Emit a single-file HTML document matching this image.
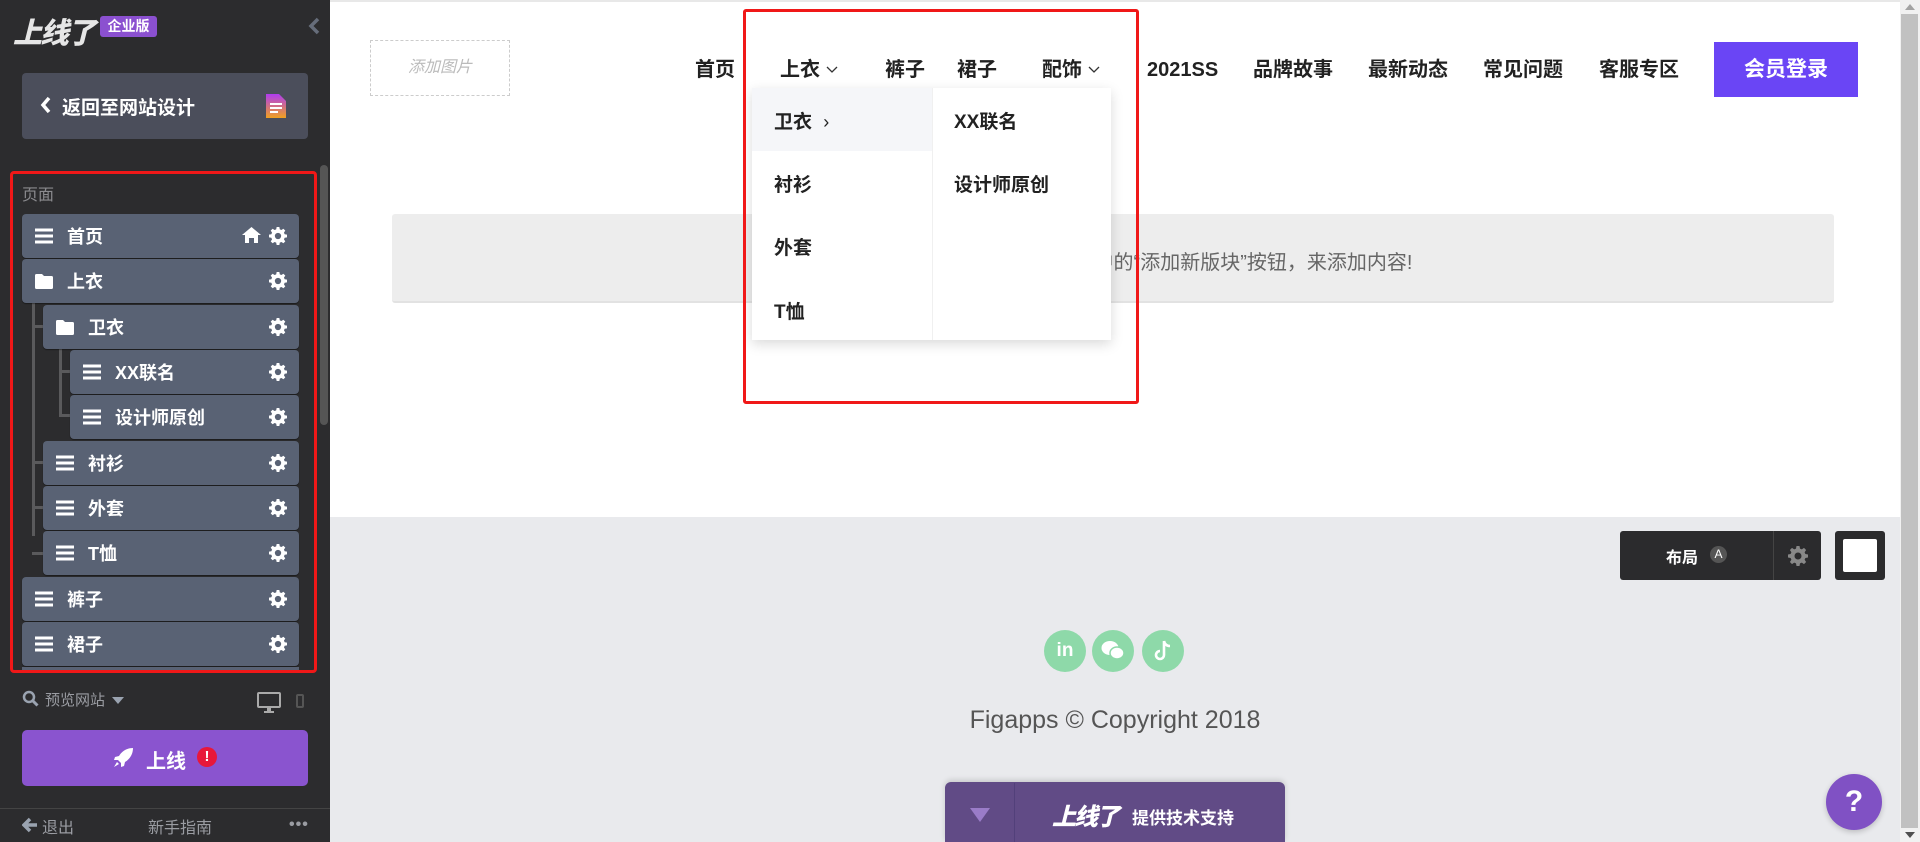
<!DOCTYPE html>
<html><head><meta charset="utf-8">
<style>
*{margin:0;padding:0;box-sizing:border-box}
body{width:1920px;height:842px;overflow:hidden;position:relative;background:#fff;font-family:"Liberation Sans","Noto Sans CJK SC",sans-serif}
.abs{position:absolute}
#side{left:0;top:0;width:330px;height:842px;background:#2c2c2e}
.row{position:absolute;height:44px;right:31px;background:#596274;border-radius:4px;box-shadow:0 1px 1px rgba(0,0,0,.4);color:#fff;font-weight:bold;font-size:18px;display:flex;align-items:center}
.row .ic{width:18px;margin-left:13px;margin-right:14px;display:flex}
.row .g{position:absolute;right:12px;top:13px}
.nav{position:absolute;top:56px;height:28px;line-height:28px;font-size:20px;font-weight:bold;color:#222;white-space:nowrap;display:flex;align-items:center}
.nav svg{margin-left:6px}
.dd{position:absolute;font-size:19px;font-weight:bold;color:#222}
</style></head><body>
<svg width="0" height="0" style="position:absolute"><defs>
  <symbol id="gear" viewBox="0 0 20 20"><path d="M8.5 0h3l.5 2.6 1.8.8 2.2-1.5 2.1 2.1-1.5 2.2.8 1.8 2.6.5v3l-2.6.5-.8 1.8 1.5 2.2-2.1 2.1-2.200-1.5-1.8.8-.5 2.6h-3l-.5-2.6-1.8-.8-2.2 1.5-2.1-2.1 1.5-2.2-.8-1.8L0 11.5v-3l2.6-.5.8-1.8-1.5-2.2 2.1-2.1 2.2 1.5 1.8-.8zM10 6.5a3.5 3.5 0 1 0 0 7 3.5 3.5 0 0 0 0-7z"/></symbol>
  <symbol id="bars" viewBox="0 0 18 16"><path d="M0 2h18M0 8h18M0 14h18" stroke="#fff" stroke-width="3"/></symbol>
  <symbol id="fold" viewBox="0 0 18 15"><path fill="#fff" d="M0 1.5Q0 0 1.5 0H7l2 2h7.5Q18 2 18 3.5v10q0 1.5-1.5 1.5h-15Q0 15 0 13.5z"/></symbol>
  <symbol id="chev" viewBox="0 0 12 8"><path d="M1 1l5 5 5-5" stroke="#333" stroke-width="1.3" fill="none"/></symbol>
 </defs></svg>
<div id="side" class="abs">
 <div class="abs" style="left:13px;top:10px;font-size:29px;font-weight:900;font-style:italic;color:#e6e6e6;letter-spacing:-2px">上线了</div>
 <div class="abs" style="left:100px;top:16px;width:57px;height:21px;background:#8b50d0;border-radius:3px;color:#fff;font-size:14px;font-weight:bold;text-align:center;line-height:21px">企业版</div>
 <svg class="abs" style="left:308px;top:17px" width="12" height="18" viewBox="0 0 12 18"><path d="M10 2 3 9l7 7" stroke="#666d7a" stroke-width="3.5" fill="none"/></svg>
 <div class="abs" style="left:22px;top:73px;width:286px;height:66px;background:#4b4e5b;border-radius:4px"></div>
 <svg class="abs" style="left:40px;top:96px" width="12" height="18" viewBox="0 0 12 18"><path d="M9 2 3 9l6 7" stroke="#fff" stroke-width="3.5" fill="none"/></svg>
 <div class="abs" style="left:62px;top:93px;color:#fff;font-size:19px;font-weight:bold">返回至网站设计</div>
 <svg class="abs" style="left:266px;top:94px" width="20" height="24" viewBox="0 0 20 24"><defs><linearGradient id="gr" x1="0" y1="0" x2="0" y2="1"><stop offset="0" stop-color="#b03cf0"/><stop offset="1" stop-color="#f0a020"/></linearGradient></defs><path d="M0 0h13l7 7v17H0z" fill="url(#gr)"/><path d="M4 10h12M4 14h12M4 18h8" stroke="#fff" stroke-width="2"/></svg>
 <div class="abs" style="left:320px;top:165px;width:8px;height:260px;background:#555;border-radius:4px"></div>
 <div class="abs" style="left:10px;top:171px;width:307px;height:502px;border:3px solid #f01818;border-radius:4px"></div>
 <div class="abs" style="left:22px;top:181px;color:#8a8a8e;font-size:16px">页面</div>
 <div class="abs" style="left:32px;top:303px;width:3px;height:233px;background:#5a5a5c"></div>
 <div class="abs" style="left:32px;top:325px;width:11px;height:3px;background:#5a5a5c"></div>
 <div class="abs" style="left:32px;top:461px;width:11px;height:3px;background:#5a5a5c"></div>
 <div class="abs" style="left:32px;top:506px;width:11px;height:3px;background:#5a5a5c"></div>
 <div class="abs" style="left:32px;top:552px;width:11px;height:3px;background:#5a5a5c"></div>
 <div class="abs" style="left:59px;top:348px;width:3px;height:68px;background:#5a5a5c"></div>
 <div class="abs" style="left:59px;top:370px;width:11px;height:3px;background:#5a5a5c"></div>
 <div class="abs" style="left:59px;top:414px;width:11px;height:3px;background:#5a5a5c"></div>
 <div class="row" style="top:214px;left:22px"><span class="ic"><svg width="18" height="16"><use href="#bars"/></svg></span>首页
  <svg class="abs" style="right:38px;top:13px" width="19" height="16" viewBox="0 0 19 16"><path fill="#fff" d="M9.5 0 19 8h-3v8h-4v-5H7v5H3V8H0z"/></svg><svg class="g" width="18" height="18" fill="#fff"><use href="#gear"/></svg></div>
 <div class="row" style="top:259px;left:22px"><span class="ic"><svg width="18" height="15"><use href="#fold"/></svg></span>上衣<svg class="g" width="18" height="18" fill="#fff"><use href="#gear"/></svg></div>
 <div class="row" style="top:305px;left:43px"><span class="ic"><svg width="18" height="15"><use href="#fold"/></svg></span>卫衣<svg class="g" width="18" height="18" fill="#fff"><use href="#gear"/></svg></div>
 <div class="row" style="top:350px;left:70px"><span class="ic"><svg width="18" height="16"><use href="#bars"/></svg></span>XX联名<svg class="g" width="18" height="18" fill="#fff"><use href="#gear"/></svg></div>
 <div class="row" style="top:395px;left:70px"><span class="ic"><svg width="18" height="16"><use href="#bars"/></svg></span>设计师原创<svg class="g" width="18" height="18" fill="#fff"><use href="#gear"/></svg></div>
 <div class="row" style="top:441px;left:43px"><span class="ic"><svg width="18" height="16"><use href="#bars"/></svg></span>衬衫<svg class="g" width="18" height="18" fill="#fff"><use href="#gear"/></svg></div>
 <div class="row" style="top:486px;left:43px"><span class="ic"><svg width="18" height="16"><use href="#bars"/></svg></span>外套<svg class="g" width="18" height="18" fill="#fff"><use href="#gear"/></svg></div>
 <div class="row" style="top:531px;left:43px"><span class="ic"><svg width="18" height="16"><use href="#bars"/></svg></span>T恤<svg class="g" width="18" height="18" fill="#fff"><use href="#gear"/></svg></div>
 <div class="row" style="top:577px;left:22px"><span class="ic"><svg width="18" height="16"><use href="#bars"/></svg></span>裤子<svg class="g" width="18" height="18" fill="#fff"><use href="#gear"/></svg></div>
 <div class="row" style="top:622px;left:22px"><span class="ic"><svg width="18" height="16"><use href="#bars"/></svg></span>裙子<svg class="g" width="18" height="18" fill="#fff"><use href="#gear"/></svg></div>
 <div class="abs" style="left:22px;top:667px;width:277px;height:3px;background:#596274"></div>
 <svg class="abs" style="left:22px;top:690px" width="17" height="17" viewBox="0 0 17 17"><circle cx="7" cy="7" r="5" stroke="#9aa3b0" stroke-width="2.5" fill="none"/><path d="M10.5 10.5 15.5 15.5" stroke="#9aa3b0" stroke-width="3"/></svg>
 <div class="abs" style="left:45px;top:689px;color:#9a9ca2;font-size:15px">预览网站</div>
 <svg class="abs" style="left:112px;top:697px" width="12" height="7"><path d="M0 0h12L6 7z" fill="#9aa3b0"/></svg>
 <svg class="abs" style="left:257px;top:692px" width="24" height="22" viewBox="0 0 24 22"><rect x="1" y="1" width="22" height="14" rx="1" stroke="#aaa" stroke-width="2" fill="none"/><path d="M10 16h4v3h3v2H7v-2h3z" fill="#aaa"/></svg>
 <div class="abs" style="left:296px;top:694px;width:8px;height:14px;border:2px solid #555;border-radius:2px"></div>
 <div class="abs" style="left:22px;top:730px;width:286px;height:56px;background:#8a54cf;border-radius:5px"></div>
 <svg class="abs" style="left:114px;top:748px" width="19" height="19" viewBox="0 0 19 19"><path fill="#fff" d="M19 0C13 0 8 3 5 8L1 9l-1 3 4 0 3 3 0 4 3-1 1-4c5-3 8-8 8-14zM3 14l-3 5 5-3z"/></svg>
 <div class="abs" style="left:146px;top:745px;color:#fff;font-size:20px;font-weight:bold">上线</div>
 <div class="abs" style="left:197px;top:747px;width:20px;height:20px;border-radius:50%;background:#e8173a;color:#fff;font-size:15px;font-weight:bold;text-align:center;line-height:20px">!</div>
 <div class="abs" style="left:0;top:808px;width:330px;height:1px;background:#444"></div>
 <svg class="abs" style="left:22px;top:817px" width="16" height="16" viewBox="0 0 16 16"><path d="M8 2 2 8l6 6M3 8h12" stroke="#9aa3b0" stroke-width="3.5" fill="none"/></svg>
 <div class="abs" style="left:42px;top:814px;color:#9a9ca2;font-size:16px">退出</div>
 <div class="abs" style="left:148px;top:814px;color:#9a9ca2;font-size:16px">新手指南</div>
 <div class="abs" style="left:289px;top:816px;color:#9a9ca2;font-size:16px;font-weight:bold;letter-spacing:1px">•••</div>
</div>

<div class="abs" style="left:330px;top:0;width:1570px;height:2px;background:#e8e8e8"></div>
<div class="abs" style="left:370px;top:40px;width:140px;height:56px;border:1px dashed #ccc;color:#bbb;font-size:16px;font-style:italic;text-align:center;line-height:54px">添加图片</div>
<div class="nav" style="left:695px">首页</div>
<div class="nav" style="left:780px">上衣<svg width="12" height="8"><use href="#chev"/></svg></div>
<div class="nav" style="left:885px">裤子</div>
<div class="nav" style="left:957px">裙子</div>
<div class="nav" style="left:1042px">配饰<svg width="12" height="8"><use href="#chev"/></svg></div>
<div class="nav" style="left:1147px">2021SS</div>
<div class="nav" style="left:1253px">品牌故事</div>
<div class="nav" style="left:1368px">最新动态</div>
<div class="nav" style="left:1483px">常见问题</div>
<div class="nav" style="left:1599px">客服专区</div>
<div class="abs" style="left:1714px;top:42px;width:144px;height:55px;background:#6a45f5;color:#fff;font-size:21px;font-weight:bold;text-align:center;line-height:55px">会员登录</div>

<div class="abs" style="left:392px;top:214px;width:1442px;height:89px;background:#ededed;border-bottom:2px solid #e2e2e2;border-radius:3px"></div>
<div class="abs" style="left:392px;top:246px;width:1442px;text-align:center;color:#666;font-size:20px">本页面暂无内容，请点击编辑器中的“添加新版块”按钮，来添加内容!</div>

<div class="abs" style="left:752px;top:88px;width:359px;height:252px;background:#fff;box-shadow:0 4px 12px rgba(0,0,0,.15)"></div>
<div class="abs" style="left:752px;top:88px;width:180px;height:63px;background:#f5f6f9"></div>
<div class="abs" style="left:932px;top:88px;width:1px;height:252px;background:#f0f0f0"></div>
<div class="dd" style="left:774px;top:107px">卫衣 <span style="font-weight:normal;font-size:18px;margin-left:6px">›</span></div>
<div class="dd" style="left:774px;top:170px">衬衫</div>
<div class="dd" style="left:774px;top:233px">外套</div>
<div class="dd" style="left:774px;top:297px">T恤</div>
<div class="dd" style="left:954px;top:107px">XX联名</div>
<div class="dd" style="left:954px;top:170px">设计师原创</div>
<div class="abs" style="left:743px;top:9px;width:396px;height:395px;border:3px solid #f01818;border-radius:3px"></div>

<div class="abs" style="left:330px;top:517px;width:1570px;height:325px;background:#e9eaed"></div>
<div class="abs" style="left:1620px;top:531px;width:201px;height:49px;background:#2b2b2d;border-radius:3px"></div>
<div class="abs" style="left:1773px;top:531px;width:1px;height:49px;background:#444"></div>
<div class="abs" style="left:1666px;top:544px;color:#fff;font-size:16px;font-weight:bold">布局</div>
<div class="abs" style="left:1710px;top:546px;width:17px;height:17px;border-radius:50%;background:#555;color:#fff;font-size:12px;text-align:center;line-height:17px">A</div>
<svg class="abs" style="left:1788px;top:546px" width="20" height="20" fill="#888"><use href="#gear"/></svg>
<div class="abs" style="left:1835px;top:531px;width:50px;height:49px;background:#2b2b2d;border-radius:3px"></div>
<div class="abs" style="left:1843px;top:539px;width:34px;height:33px;background:#fff;border-radius:2px"></div>
<div class="abs" style="left:1044px;top:630px;width:42px;height:42px;border-radius:50%;background:#8ed9a9;color:#fff;font-weight:bold;font-size:19px;text-align:center;line-height:42px">in</div>
<div class="abs" style="left:1092px;top:630px;width:42px;height:42px;border-radius:50%;background:#8ed9a9"></div>
<svg class="abs" style="left:1101px;top:640px" width="24" height="22" viewBox="0 0 24 22"><ellipse cx="9" cy="8" rx="8.5" ry="7" fill="#fff"/><ellipse cx="16" cy="13" rx="7" ry="6" fill="#fff" stroke="#8ed9a9" stroke-width="1.5"/></svg>
<div class="abs" style="left:1142px;top:630px;width:42px;height:42px;border-radius:50%;background:#8ed9a9"></div>
<svg class="abs" style="left:1154px;top:640px" width="18" height="22" viewBox="0 0 18 22"><path d="M10 1v14a4 4 0 1 1-4-4M10 1q1 5 6 5" stroke="#fff" stroke-width="2.6" fill="none"/></svg>
<div class="abs" style="left:330px;top:706px;width:1570px;text-align:center;color:#555;font-size:25px">Figapps © Copyright 2018</div>
<div class="abs" style="left:945px;top:782px;width:340px;height:60px;background:#614b86;border-radius:6px 6px 0 0;box-shadow:0 -2px 6px rgba(0,0,0,.15)"></div>
<div class="abs" style="left:1014px;top:783px;width:1px;height:59px;background:#52407a"></div>
<svg class="abs" style="left:970px;top:808px" width="20" height="14"><path d="M0 0h20L10 14z" fill="#9a7cc8"/></svg>
<div class="abs" style="left:1052px;top:797px;color:#fff;font-size:24px;font-weight:900;font-style:italic;letter-spacing:-2px">上线了</div>
<div class="abs" style="left:1132px;top:804px;color:#fff;font-size:17px;font-weight:bold">提供技术支持</div>
<div class="abs" style="left:1826px;top:774px;width:56px;height:56px;border-radius:50%;background:#8051c4;color:#fff;font-size:30px;font-weight:bold;text-align:center;line-height:56px;box-shadow:0 2px 6px rgba(0,0,0,.2)">?</div>

<div class="abs" style="left:1900px;top:0;width:20px;height:842px;background:#f1f1f1"></div>
<div class="abs" style="left:1901px;top:14px;width:17px;height:814px;background:#c1c1c1"></div>
<svg class="abs" style="left:1905px;top:4px" width="10" height="6"><path d="M0 6h10L5 0z" fill="#a3a3a3"/></svg>
<svg class="abs" style="left:1905px;top:832px" width="10" height="6"><path d="M0 0h10L5 6z" fill="#505050"/></svg>
</body></html>
